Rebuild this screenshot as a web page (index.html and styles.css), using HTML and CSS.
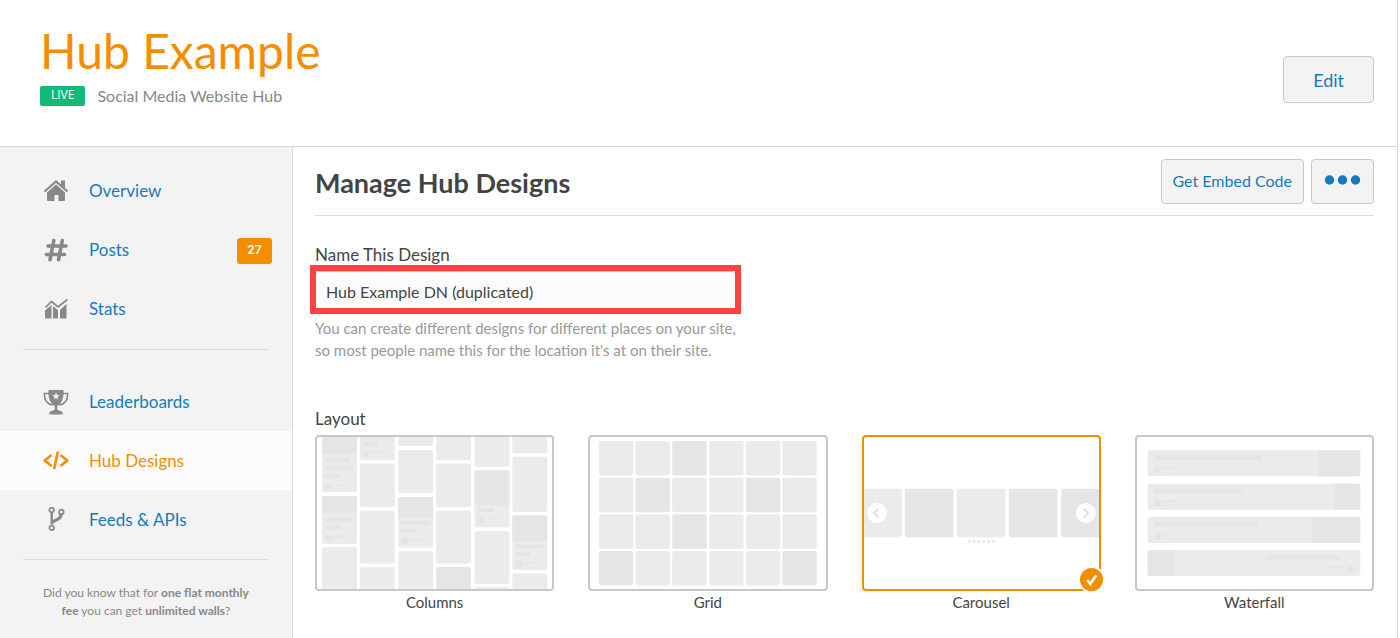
FILE: index.html
```
<!DOCTYPE html>
<html lang="en">
<head>
<meta charset="utf-8">
<title>Hub Example</title>
<link rel="stylesheet" href="styles.css">
</head>
<body>
<div class="page">
  <header class="hub-header">
    <div>
      <h1 class="hub-title">Hub Example</h1>
      <div class="hub-meta"><span class="live">LIVE</span><span class="hub-kind">Social Media Website Hub</span></div>
    </div>
    <button class="btn btn-edit" type="button">Edit</button>
  </header>
  <div class="body">
    <aside class="sidebar">
      <nav>
        <a class="nav-item" href="#overview">
          <svg class="icon" viewBox="0 0 26 26"><path d="M1.500 13.500 13 3.500l11.500 10" fill="none" stroke="currentColor" stroke-width="2.200"/><path d="M18 2.500h4v8l-4-3.600zM13 6.500l9 8v7.500q0 1-1 1h-5.500v-6h-4v6H5q-1 0-1-1v-7.500z"/></svg>
          <span class="nav-text">Overview</span></a>
        <a class="nav-item" href="#posts">
          <svg class="icon" viewBox="0 0 26 26"><path d="M10.800 3.600 7 22.800M19.300 3.600l-3.800 19.200M5 9h18M3.500 17.500h18" fill="none" stroke="currentColor" stroke-width="3.600" stroke-linecap="round"/></svg>
          <span class="nav-text">Posts</span><span class="count">27</span></a>
        <a class="nav-item" href="#stats">
          <svg class="icon" viewBox="0 0 26 26"><path d="m2.500 11.500 6-6 6.500 5.500L24.500 3.500" fill="none" stroke="currentColor" stroke-width="1.700"/><path d="M2 14.500 8.500 9v13.500H2zM10 10l5 4.300v8.200h-5zM17 14l6.500-6v14.500H17z"/></svg>
          <span class="nav-text">Stats</span></a>
      </nav>
      <hr class="rule">
      <nav>
        <a class="nav-item" href="#leaderboards">
          <svg class="icon" viewBox="0 0 26 26"><path d="M6 4.500H1.300c0 7 2.700 11 8.700 11.500M20 4.500h4.700c0 7-2.700 11-8.700 11.500" fill="none" stroke="currentColor" stroke-width="1.600"/><path fill-rule="evenodd" d="M5.500 1h15c.5 8-1.500 13-6.200 16v3.700l5.200 2.300v2.500h-13V23l5.200-2.300V17C7 14 5 9 5.500 1zM13 3.300l-1 2.700-2.800.1 2.200 1.800-.8 2.700L13 9l2.400 1.600-.8-2.700 2.200-1.800L14 6z"/></svg>
          <span class="nav-text">Leaderboards</span></a>
        <a class="nav-item active" href="#designs" aria-current="page">
          <svg class="icon" viewBox="0 0 26 26"><path d="M8.500 7 1.800 12.500 8.500 18M17.500 7l6.700 5.500-6.700 5.500" fill="none" stroke="currentColor" stroke-width="2.600"/><path d="M14.900 3.500 11.100 21" fill="none" stroke="currentColor" stroke-width="2.600"/></svg>
          <span class="nav-text">Hub Designs</span></a>
        <a class="nav-item" href="#feeds">
          <svg class="icon" viewBox="0 0 26 26"><g fill="none" stroke="currentColor"><path d="M8.700 5.500v12" stroke-width="2.400"/><path d="M9 16c1.500-4 8.500-1.500 9.300-9" stroke-width="3"/><g stroke-width="1.700"><circle cx="8.700" cy="3" r="2.300"/><circle cx="18.300" cy="5" r="2.300"/><circle cx="8.700" cy="20.800" r="2.300"/></g></g></svg>
          <span class="nav-text">Feeds &amp; APIs</span></a>
      </nav>
      <hr class="rule">
      <p class="tip">Did you know that for <b>one flat monthly fee</b> you can get <b>unlimited walls</b>?</p>
    </aside>
    <main class="main">
      <div class="main-head">
        <h2 class="main-title">Manage Hub Designs</h2>
        <div class="actions">
          <button class="btn btn-embed" type="button">Get Embed Code</button>
          <button class="btn btn-more" type="button" aria-label="More"><svg class="dots" viewBox="0 0 37 10"><circle cx="5.500" cy="5" r="4.700"/><circle cx="18.500" cy="5" r="4.700"/><circle cx="31.500" cy="5" r="4.700"/></svg></button>
        </div>
      </div>
      <label class="label" for="design-name">Name This Design</label>
      <div class="highlight"><input class="text-input" id="design-name" type="text" value="Hub Example DN (duplicated)"></div>
      <p class="help">You can create different designs for different places on your site, so most people name this for the location it's at on their site.</p>
      <fieldset class="layouts">
        <legend class="label">Layout</legend>
        <div class="options">
          <label class="option">
            <input class="radio" type="radio" name="layout">
            <span class="thumb"><svg class="art" viewBox="0 0 236 152" preserveAspectRatio="none">
              <g class="lt"><rect x="5" y="-9" width="35" height="64" rx="2"/><rect x="5" y="59" width="35" height="48" rx="2"/><rect x="5" y="110" width="35" height="50" rx="2"/>
              <rect x="43" y="-9" width="35" height="32" rx="2"/><rect x="43" y="26.500" width="35" height="43.500" rx="2"/><rect x="43" y="73.500" width="35" height="53" rx="2"/><rect x="43" y="130" width="35" height="30" rx="2"/>
              <rect x="81.500" y="-9" width="35" height="18" rx="2"/><rect x="81.500" y="13" width="35" height="43" rx="2"/><rect x="81.500" y="60" width="35" height="50.500" rx="2"/><rect x="81.500" y="114" width="35" height="50" rx="2"/>
              <rect x="119.500" y="-9" width="35" height="32" rx="2"/><rect x="119.500" y="26.500" width="35" height="43.500" rx="2"/><rect x="119.500" y="73.500" width="35" height="53" rx="2"/>
              <rect x="158" y="-9" width="35" height="39" rx="2"/><rect x="158" y="33.500" width="35" height="57" rx="2"/><rect x="158" y="94" width="35" height="53" rx="2"/><rect x="158" y="150" width="35" height="10" rx="2"/>
              <rect x="196" y="-9" width="35" height="25.500" rx="2"/><rect x="196" y="19.500" width="35" height="55.500" rx="2"/><rect x="196" y="78.500" width="35" height="54.500" rx="2"/><rect x="196" y="136.500" width="35" height="30" rx="2"/></g>
              <g class="dk"><path d="M5 0h35v17H5zM5 59h35v17H5zM81.500 60h35v20.500h-35zM158 33.500h35V68h-35zM196 78.500h35V104h-35z"/><rect x="119.500" y="130" width="35" height="30" rx="2"/>
              <path d="M8 21.500h25v4H8zM8 29.500h28v4H8zM8 37h15v4H8zM17 47.500h11v1.500H17zM8 80.500h28v4H8zM8 88.500h15v4H8zM17 98.500h11v1.500H17zM46 0h28v1H46zM46 4.500h15v4H46zM55 14.500h11V16H55zM84.500 84h28v4h-28zM84.500 92h15v4h-15zM94 102h11v1.500H94zM162 71h15v4h-15zM171 81h11v1.500h-11zM199 107.500h28v4h-28zM199 115h15v4h-15zM208 125h11v1.500h-11z"/>
              <circle cx="11" cy="49.500" r="3.500"/><circle cx="11" cy="101" r="3.500"/><circle cx="49.500" cy="16.500" r="3.500"/><circle cx="88" cy="104" r="3.500"/><circle cx="165" cy="83" r="3.500"/><circle cx="202.500" cy="127" r="3.500"/></g>
            </svg></span>
            <span class="option-name">Columns</span>
          </label>
          <label class="option">
            <input class="radio" type="radio" name="layout">
            <span class="thumb"><svg class="art" viewBox="0 0 236 152" preserveAspectRatio="none">
              <g class="lt"><rect x="9" y="4" width="34.500" height="34.500" rx="2"/><rect x="45.700" y="4" width="34.500" height="34.500" rx="2"/><rect x="119.500" y="4" width="34.500" height="34.500" rx="2"/><rect x="156.300" y="4" width="34.500" height="34.500" rx="2"/><rect x="193" y="4" width="34.500" height="34.500" rx="2"/>
              <rect x="9" y="40.700" width="34.500" height="34.500" rx="2"/><rect x="82.500" y="40.700" width="34.500" height="34.500" rx="2"/><rect x="119.500" y="40.700" width="34.500" height="34.500" rx="2"/><rect x="193" y="40.700" width="34.500" height="34.500" rx="2"/>
              <rect x="9" y="77.300" width="34.500" height="34.500" rx="2"/><rect x="45.700" y="77.300" width="34.500" height="34.500" rx="2"/><rect x="119.500" y="77.300" width="34.500" height="34.500" rx="2"/><rect x="156.300" y="77.300" width="34.500" height="34.500" rx="2"/><rect x="193" y="77.300" width="34.500" height="34.500" rx="2"/>
              <rect x="45.700" y="114" width="34.500" height="34.500" rx="2"/><rect x="82.500" y="114" width="34.500" height="34.500" rx="2"/><rect x="119.500" y="114" width="34.500" height="34.500" rx="2"/><rect x="156.300" y="114" width="34.500" height="34.500" rx="2"/></g>
              <g class="dk"><rect x="82.500" y="4" width="34.500" height="34.500" rx="2"/><rect x="45.700" y="40.700" width="34.500" height="34.500" rx="2"/><rect x="156.300" y="40.700" width="34.500" height="34.500" rx="2"/><rect x="82.500" y="77.300" width="34.500" height="34.500" rx="2"/><rect x="9" y="114" width="34.500" height="34.500" rx="2"/><rect x="193" y="114" width="34.500" height="34.500" rx="2"/></g>
            </svg></span>
            <span class="option-name">Grid</span>
          </label>
          <label class="option">
            <input class="radio" type="radio" name="layout" checked>
            <span class="thumb"><svg class="art" viewBox="0 0 236 152" preserveAspectRatio="none">
              <g class="lt"><rect x="-10" y="51.700" width="48" height="48.500" rx="2"/><rect x="93.300" y="51.700" width="48.700" height="48.500" rx="2"/></g>
              <g class="dk"><rect x="41" y="51.700" width="48.700" height="48.500" rx="2"/><rect x="145.300" y="51.700" width="48.700" height="48.500" rx="2"/><rect x="198" y="51.700" width="48" height="48.500" rx="2"/>
              <circle cx="105.500" cy="104.500" r="1.400"/><circle cx="110.400" cy="104.500" r="1.400"/><circle cx="115.300" cy="104.500" r="1.400"/><circle cx="120.200" cy="104.500" r="1.400"/><circle cx="125.100" cy="104.500" r="1.400"/><circle cx="130" cy="104.500" r="1.400"/></g>
              <g fill="#fff"><circle cx="13" cy="76" r="10"/><circle cx="222.500" cy="76" r="10"/></g>
              <path d="m14.500 72-4.500 4 4.500 4.500M220.500 72l4.500 4-4.500 4.500" fill="none" stroke="#d3d3d3" stroke-width="1.200"/>
            </svg><span class="tick"><svg class="tick-mark" viewBox="0 0 24 24"><path d="m7.500 12.500 3.200 4L17 7.500" fill="none" stroke="#fff" stroke-width="2.600"/></svg></span></span>
            <span class="option-name">Carousel</span>
          </label>
          <label class="option">
            <input class="radio" type="radio" name="layout">
            <span class="thumb"><svg class="art" viewBox="0 0 236 152" preserveAspectRatio="none">
              <g class="lt"><rect x="10.700" y="13.300" width="213.300" height="26" rx="2"/><rect x="10.700" y="46.700" width="213.300" height="26" rx="2"/><rect x="10.700" y="80" width="213.300" height="26" rx="2"/><rect x="10.700" y="113" width="213.300" height="26" rx="2"/></g>
              <g class="dk"><path d="M182 13.300h40q2 0 2 2v22q0 2-2 2h-40zM197.700 46.700H222q2 0 2 2v22q0 2-2 2h-24.300zM176 80h46q2 0 2 2v22q0 2-2 2h-46zM37 113H12.700q-2 0-2 2v22q0 2 2 2H37z"/>
              <rect x="17" y="18.500" width="108" height="4.500" rx="1"/><rect x="17" y="52" width="88" height="4.500" rx="1"/><rect x="17" y="85" width="104" height="4.500" rx="1"/><rect x="129" y="118" width="74" height="5" rx="1"/>
              <circle cx="20.500" cy="32.500" r="3.500"/><circle cx="20.500" cy="66" r="3.500"/><circle cx="20.500" cy="99" r="3.500"/><circle cx="214" cy="132.300" r="3.500"/>
              <path d="M26 30h10v2H26zM26 63.300h15v2H26zM26 96.500h8v2h-8zM193 129.500h15v2h-15zM206 134h2v1.500h-2zM27 34.500h2V36h-2zM27 67.500h2V69h-2zM27 100.500h2v1.500h-2z"/></g>
            </svg></span>
            <span class="option-name">Waterfall</span>
          </label>
        </div>
      </fieldset>
    </main>
  </div>
</div>
</body>
</html>
```
FILE: styles.css
```
* { box-sizing: border-box; }
body {
  margin: 0;
  background: #fff;
  color: #444;
  font: 15px/22px Lato, sans-serif;
}
h1, h2, p { margin: 0; }
.page {
  margin-right: 2px;
  border-right: 1px solid #dcdcdc;
  min-height: 100vh;
  display: flex;
  flex-direction: column;
}
.hub-header {
  display: flex;
  justify-content: space-between;
  align-items: flex-start;
  padding: 22px 23px 39px 40px;
  border-bottom: 1px solid #dcdcdc;
}
.hub-title {
  color: #f48e00;
  font-size: 48px;
  font-weight: 400;
  line-height: 58px;
}
.hub-meta {
  display: flex;
  align-items: center;
  gap: 12px;
  padding-top: 5px;
}
.live {
  background: #14b877;
  border-radius: 2px;
  color: #fff;
  font: 12px/18px "Open Sans", sans-serif;
  padding: 0 11px 2px;
}
.hub-kind { color: #888; font-size: 16px; }
.btn {
  background: #f3f3f3;
  border: 1px solid #c8c8c8;
  border-radius: 4px;
  color: #137bbd;
  font: 16px/22px Lato, sans-serif;
}
.btn-edit {
  font-size: 18px;
  padding: 12px 29px 11px;
  margin-top: 34px;
}
.body { display: flex; flex: 1; }
.sidebar {
  flex: 0 0 293px;
  background: #f3f3f3;
  border-right: 1px solid #dcdcdc;
  padding-top: 14px;
}
.nav-item {
  display: flex;
  align-items: center;
  gap: 20px;
  height: 59px;
  padding: 0 20px 0 43px;
  color: #137bbd;
  font-size: 17px;
  text-decoration: none;
}
.icon {
  width: 26px;
  height: 26px;
  color: #888;
  fill: currentColor;
}
.active { background: #fcfcfc; color: #f48e00; }
.active .icon { color: #f48e00; }
.count {
  margin: 2px 0 0 auto;
  background: #f48e00;
  border-radius: 3px;
  color: #fff;
  font: 500 13px/24px Roboto, sans-serif;
  padding: 0 10px 2px;
}
.rule {
  height: 1px;
  border: 0;
  background: #dcdcdc;
  margin: 11px 23px 22px;
}
nav + .rule:has(+ .tip) { margin-top: 10px; }
.tip {
  padding: 2px 35px 0;
  text-align: center;
  color: #888;
  font-size: 12px;
  line-height: 18px;
}
.main { flex: 1; padding: 12px 23px 24px 22px; }
.main-head {
  display: flex;
  justify-content: space-between;
  align-items: center;
  padding-bottom: 11px;
  border-bottom: 1px solid #dcdcdc;
}
.main-title { font-size: 27px; font-weight: 700; line-height: 32px; padding-top: 2px; }
.actions { display: flex; gap: 7px; }
.btn-embed { padding: 10px 11px 11px; }
.btn-more { padding: 9px 12px 12px; }
.dots { display: block; width: 37px; height: 10px; fill: #137bbd; }
.label { display: block; padding: 0; font-size: 17px; line-height: 24px; }
.main > .label { margin-top: 27px; }
.highlight {
  width: 431px;
  margin: -2px 0 0 -5px;
  border: 6px solid #ff4141;
  background: #fcfcfc;
}
.text-input {
  display: block;
  width: 100%;
  border: 0;
  border-top: 1px solid #c8c8c8;
  border-radius: 3px;
  background: #fcfcfc;
  color: #444;
  font: 16px/22px Lato, sans-serif;
  padding: 9px 10px 5px;
}
.help { max-width: 431px; margin-top: 3px; color: #999; }
.layouts { border: 0; margin: 46px 0 0; padding: 0; min-width: 0; }
.options {
  display: grid;
  grid-template-columns: repeat(4, 1fr);
  gap: 34px;
  padding-top: 4px;
}
.option { position: relative; text-align: center; }
.radio { position: absolute; opacity: 0; margin: 0; }
.thumb {
  display: block;
  position: relative;
  border: 2px solid #c8c8c8;
  border-radius: 4px;
}
.radio:checked + .thumb { border-color: #f48e00; }
.art { display: block; width: 100%; height: 152px; }
.lt { fill: #ebebeb; }
.dk { fill: #e5e5e5; }
.tick {
  position: absolute;
  right: -6px;
  bottom: -4px;
  width: 27px;
  height: 27px;
  border: 2px solid #fff;
  border-radius: 50%;
  background: #f48e00;
}
.tick-mark { display: block; }
.option-name { display: block; }
```
